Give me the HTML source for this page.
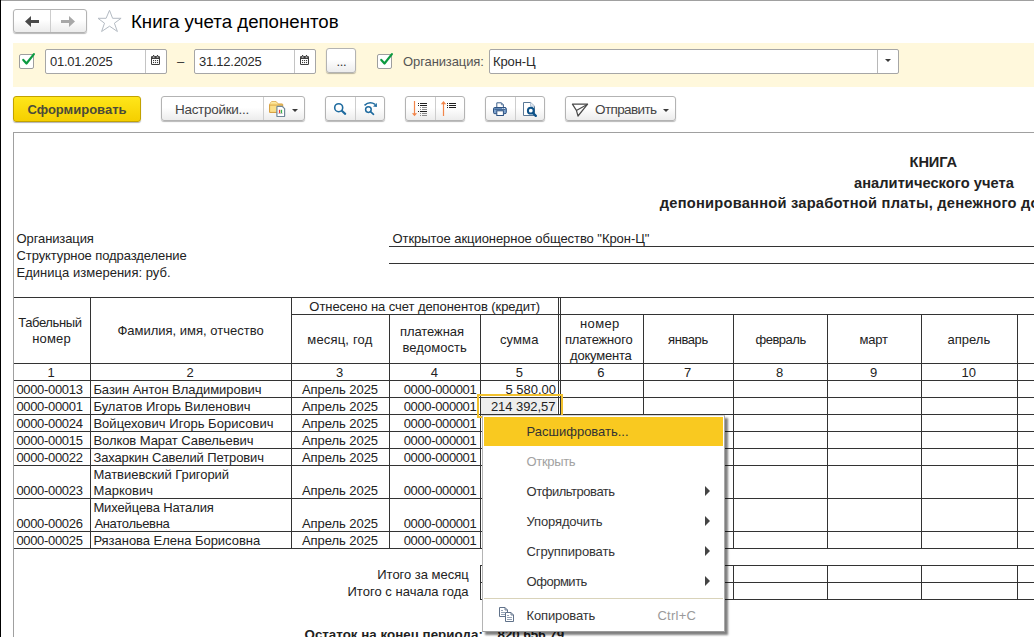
<!DOCTYPE html>
<html lang="ru">
<head>
<meta charset="utf-8">
<title>Книга учета депонентов</title>
<style>
*{box-sizing:border-box;margin:0;padding:0}
html,body{width:1034px;height:637px;overflow:hidden;background:#fff}
body{position:relative;font-family:"Liberation Sans",Arial,sans-serif;font-size:13px;color:#333;}
.abs{position:absolute}
.lb{position:absolute;left:0;top:0;width:1px;height:637px;background:#000}
.tb{position:absolute;left:1px;top:0;width:1033px;height:1px;background:#a0a0a0}
.btn{position:absolute;border:1px solid #b3b3b3;border-radius:3px;background:linear-gradient(#ffffff 0%,#ffffff 45%,#ececec 100%);box-shadow:0 1px 1px rgba(0,0,0,.28);}
.btn .div{position:absolute;top:0;bottom:0;width:1px;background:#cdcdcd}
.btn .lbl{position:absolute;white-space:nowrap;color:#444;line-height:15px}
.title{position:absolute;left:131px;top:11px;font-size:18.67px;line-height:22px;color:#000;white-space:nowrap}
.band{position:absolute;left:13px;top:43px;width:1021px;height:44px;background:#fff8dc}
.inp{position:absolute;border:1px solid #a6a6a6;border-radius:2px;background:#fff;height:25px}
.inp .t{position:absolute;left:4px;top:4px;line-height:15px;color:#2a2a2a;white-space:nowrap;letter-spacing:-0.25px}
.cb{position:absolute;width:15px;height:15px;border:1px solid #9e9e9e;border-radius:2px;background:#fff}
.ss{position:absolute;left:13px;top:132px;width:1030px;height:520px;border:1px solid #a0a0a0;background:#fff}
.sheet{position:absolute;left:0;top:0;width:1034px;height:637px;font-size:13px;color:#222}
.sheet .t{position:absolute;white-space:nowrap;line-height:16px}
.cl{position:absolute;display:flex;line-height:16px;white-space:nowrap;overflow:hidden}
.sheet .b{font-weight:bold;font-size:14.67px;line-height:18px;color:#222}
.sheet .b2{font-weight:bold;font-size:13.33px;line-height:16px;color:#222}
.hl{position:absolute;height:1px;background:#333}
.vl{position:absolute;width:1px;background:#333}
.c{text-align:center}
.r{text-align:right}
.menu{position:absolute;left:482px;top:415px;width:243px;height:217px;background:#fff;border:1px solid #d4d4d4;border-left-color:#b4b4b4;border-right-color:#a8a8a8;border-bottom-color:#9a9a9a;box-shadow:3px 3px 2px rgba(0,0,0,.5)}
.mi{position:absolute;left:45px;white-space:nowrap;line-height:15px;color:#333}
.arr{position:absolute;left:222px;width:0;height:0;border-left:5px solid #444;border-top:5px solid transparent;border-bottom:5px solid transparent}
#mtext .t{color:#333}
</style>
</head>
<body>
<div class="lb"></div><div class="tb"></div>

<!-- nav buttons -->
<div class="btn" style="left:13px;top:9px;width:74px;height:24px">
  <div class="div" style="left:36px"></div>
  <svg class="abs" style="left:11px;top:6px" width="14" height="11" viewBox="0 0 14 11"><path d="M0 5.5 L6 0 L6 4 L14 4 L14 7 L6 7 L6 11 Z" fill="#4a4a4a"/></svg>
  <svg class="abs" style="left:47px;top:6px" width="14" height="11" viewBox="0 0 14 11"><path d="M14 5.5 L8 0 L8 4 L0 4 L0 7 L8 7 L8 11 Z" fill="#a8a8a8"/></svg>
</div>
<svg class="abs" style="left:97px;top:9px" width="26" height="24" viewBox="0 0 26 24"><path d="M12.5 1.3 L15.6 9.3 L24.1 9.3 L17.4 14.2 L20.4 22.5 L12.6 17.2 L4.6 22.5 L7.5 14.2 L1 9.3 L9.1 9.3 Z" fill="#fff" stroke="#b4bbc3" stroke-width="1"/></svg>
<div class="title">Книга учета депонентов</div>

<!-- yellow band -->
<div class="band"></div>
<div class="cb" style="left:19px;top:54px"></div>
<svg class="abs" style="left:21px;top:52px" width="15" height="15" viewBox="0 0 15 15"><path d="M2.3 7.9 L5.5 11.5 L12.9 2.1" fill="none" stroke="#0c9a40" stroke-width="2.2" stroke-linecap="round" stroke-linejoin="round"/></svg>
<div class="inp" style="left:45px;top:49px;width:122px"><div class="t">01.01.2025</div><div class="abs" style="left:99px;top:0;width:1px;height:23px;background:#c4c4c4"></div>
 <svg class="abs" style="left:105px;top:5px" width="9" height="10" viewBox="0 0 9 10"><rect x="0" y="1" width="9" height="9" rx="1.2" fill="#3d3d3d"/><rect x="2" y="0" width="1.2" height="2.4" fill="#3d3d3d"/><rect x="5.9" y="0" width="1.2" height="2.4" fill="#3d3d3d"/><rect x="1.7" y="1.6" width="1.8" height="1" fill="#eee"/><rect x="5.6" y="1.6" width="1.8" height="1" fill="#eee"/><rect x="1" y="4" width="7" height="5" fill="#fff"/><g fill="#3d3d3d"><rect x="2" y="5" width="1.1" height="1.1"/><rect x="4" y="5" width="1.1" height="1.1"/><rect x="6" y="5" width="1.1" height="1.1"/><rect x="2" y="7" width="1.1" height="1.1"/><rect x="4" y="7" width="1.1" height="1.1"/><rect x="6" y="7" width="1.1" height="1.1"/></g></svg>
</div>
<div class="abs" style="left:177px;top:54px;line-height:15px;color:#333">–</div>
<div class="inp" style="left:194px;top:49px;width:122px"><div class="t">31.12.2025</div><div class="abs" style="left:99px;top:0;width:1px;height:23px;background:#c4c4c4"></div>
 <svg class="abs" style="left:105px;top:5px" width="9" height="10" viewBox="0 0 9 10"><rect x="0" y="1" width="9" height="9" rx="1.2" fill="#3d3d3d"/><rect x="2" y="0" width="1.2" height="2.4" fill="#3d3d3d"/><rect x="5.9" y="0" width="1.2" height="2.4" fill="#3d3d3d"/><rect x="1.7" y="1.6" width="1.8" height="1" fill="#eee"/><rect x="5.6" y="1.6" width="1.8" height="1" fill="#eee"/><rect x="1" y="4" width="7" height="5" fill="#fff"/><g fill="#3d3d3d"><rect x="2" y="5" width="1.1" height="1.1"/><rect x="4" y="5" width="1.1" height="1.1"/><rect x="6" y="5" width="1.1" height="1.1"/><rect x="2" y="7" width="1.1" height="1.1"/><rect x="4" y="7" width="1.1" height="1.1"/><rect x="6" y="7" width="1.1" height="1.1"/></g></svg>
</div>
<div class="btn" style="left:326px;top:48px;width:30px;height:25px"><div class="lbl" style="left:9.5px;top:4.5px;letter-spacing:-0.3px;color:#333">...</div></div>
<div class="cb" style="left:377px;top:54px"></div>
<svg class="abs" style="left:379px;top:52px" width="15" height="15" viewBox="0 0 15 15"><path d="M2.3 7.9 L5.5 11.5 L12.9 2.1" fill="none" stroke="#0c9a40" stroke-width="2.2" stroke-linecap="round" stroke-linejoin="round"/></svg>
<div class="abs" style="left:403px;top:54px;line-height:15px;color:#555;white-space:nowrap;letter-spacing:-0.1px">Организация:</div>
<div class="inp" style="left:489px;top:49px;width:410px"><div class="t" style="left:3px;letter-spacing:-0.1px">Крон-Ц</div><div class="abs" style="left:387px;top:0;width:1px;height:23px;background:#b8b8b8"></div>
 <div class="abs" style="left:394.5px;top:9.3px;width:0;height:0;border-top:3.4px solid #3a3a3a;border-left:3.2px solid transparent;border-right:3.2px solid transparent"></div>
</div>

<!-- toolbar -->
<div class="abs" style="left:13px;top:96px;width:128px;height:26px;border:1px solid #c2a200;border-radius:3px;background:linear-gradient(#ffe61a,#f5cf00);box-shadow:0 1px 1px rgba(0,0,0,.3)"><div class="abs" style="left:0;width:126px;top:5px;text-align:center;font-weight:bold;color:#4a4a3a;line-height:15px">Сформировать</div></div>

<div class="btn" style="left:161px;top:96px;width:144px;height:25px">
  <div class="lbl" style="left:13px;top:4.5px;font-size:13.5px;letter-spacing:-0.3px">Настройки...</div>
  <div class="div" style="left:101px"></div>
  <svg class="abs" style="left:107px;top:4px" width="17" height="17" viewBox="0 0 17 17"><path d="M0.6 3.4 L2.6 0.7 L7.2 0.7 L9.2 3 L13.1 3 Q13.7 3 13.7 3.6 L13.7 11.4 L0.6 11.4 Z" fill="#fbe08a" stroke="#d49a35" stroke-width="1" stroke-linejoin="round"/><path d="M1 4.1 L13.3 4.1" stroke="#dba544" stroke-width="1"/><path d="M1.4 2.6 L2.9 1.3 L6.9 1.3 L8.4 2.8" fill="none" stroke="#fff3b8" stroke-width="0.9"/><path d="M7.9 5.9 Q7.9 5.3 8.5 5.3 L13.2 5.3 L15.6 7.7 L15.6 14.9 Q15.6 15.5 15 15.5 L8.5 15.5 Q7.9 15.5 7.9 14.9 Z" fill="#fff" stroke="#6f8798" stroke-width="1.2"/><rect x="9.9" y="8.8" width="1.3" height="3.3" fill="#ee3b30"/><rect x="11.8" y="8.8" width="1.3" height="3.3" fill="#35b24a"/><rect x="9.3" y="12.1" width="4.4" height="0.6" fill="#9aa0a6"/></svg>
  <div class="abs" style="left:130px;top:12px;width:0;height:0;border-top:3.5px solid #3a3a3a;border-left:3.5px solid transparent;border-right:3.5px solid transparent"></div>
</div>
<div class="btn" style="left:325px;top:96px;width:60px;height:25px"><div class="div" style="left:29px"></div>
  <svg class="abs" style="left:6px;top:4px" width="17" height="17" viewBox="0 0 17 17"><circle cx="6.7" cy="6.7" r="4" fill="none" stroke="#1f6b9f" stroke-width="1.6"/><path d="M9.8 9.8 L13.2 12.9" stroke="#1f6b9f" stroke-width="2.1" stroke-linecap="round"/></svg>
  <svg class="abs" style="left:36px;top:3px" width="18" height="18" viewBox="0 0 18 18"><circle cx="6.4" cy="9.6" r="2.8" fill="none" stroke="#1f6b9f" stroke-width="1.5"/><path d="M8.5 11.7 L11.5 14.3" stroke="#1f6b9f" stroke-width="1.7" stroke-linecap="round"/><path d="M2.5 5.4 Q7.4 0.7 13.2 4.4" fill="none" stroke="#1f6b9f" stroke-width="1.5"/><path d="M14.9 3 L14.9 6.9 L11 6.5 Z" fill="#1f6b9f"/></svg>
</div>
<div class="btn" style="left:405px;top:96px;width:60px;height:25px"><div class="div" style="left:29px"></div>
  <svg class="abs" style="left:4px;top:2px" width="20" height="19" viewBox="0 0 20 19"><rect x="3.9" y="2" width="1.2" height="13" fill="#f2854a"/><path d="M1.9 14.3 L7.1 14.3 L4.5 17.3 Z" fill="#f2854a"/><g shape-rendering="crispEdges"><rect x="8" y="4" width="1" height="1" fill="#1e1e1e"/><rect x="10" y="4" width="7" height="1" fill="#1e1e1e"/><rect x="8" y="6" width="1" height="1" fill="#1e1e1e"/><rect x="10" y="6" width="7" height="1" fill="#1e1e1e"/><rect x="8" y="12" width="1" height="1" fill="#1e1e1e"/><rect x="10" y="12" width="7" height="1" fill="#1e1e1e"/><rect x="10" y="8" width="1" height="1" fill="#8c8c8c"/><rect x="12" y="8" width="5" height="1" fill="#8c8c8c"/><rect x="10" y="10" width="1" height="1" fill="#8c8c8c"/><rect x="12" y="10" width="5" height="1" fill="#8c8c8c"/><rect x="10" y="14" width="1" height="1" fill="#8c8c8c"/><rect x="12" y="14" width="5" height="1" fill="#8c8c8c"/><rect x="10" y="16" width="1" height="1" fill="#8c8c8c"/><rect x="12" y="16" width="5" height="1" fill="#8c8c8c"/></g></svg>
  <svg class="abs" style="left:33px;top:2px" width="20" height="19" viewBox="0 0 20 19"><rect x="3.9" y="4" width="1.2" height="13" fill="#f2854a"/><path d="M1.8 5.3 L7.2 5.3 L4.5 1.9 Z" fill="#f2854a"/><g shape-rendering="crispEdges"><rect x="8" y="4" width="1" height="1" fill="#1e1e1e"/><rect x="10" y="4" width="7" height="1" fill="#1e1e1e"/><rect x="8" y="6" width="1" height="1" fill="#1e1e1e"/><rect x="10" y="6" width="7" height="1" fill="#1e1e1e"/><rect x="8" y="8" width="1" height="1" fill="#1e1e1e"/><rect x="10" y="8" width="7" height="1" fill="#1e1e1e"/></g></svg>
</div>
<div class="btn" style="left:485px;top:96px;width:60px;height:25px"><div class="div" style="left:29px"></div>
  <svg class="abs" style="left:6px;top:4px" width="17" height="16" viewBox="0 0 17 16"><path d="M4.8 6.4 L4.8 1.8 L9.4 1.8 L11.4 3.8 L11.4 6.4" fill="#fff" stroke="#3f618c" stroke-width="1"/><path d="M9.4 1.8 L9.4 3.8 L11.4 3.8" fill="none" stroke="#3f618c" stroke-width="0.7"/><rect x="1.5" y="6.5" width="12.8" height="6.2" rx="1.3" fill="#7fa4cf" stroke="#2d5281" stroke-width="1"/><rect x="2.4" y="7.7" width="11" height="1" fill="#2d5281"/><rect x="10.3" y="7" width="1" height="0.8" fill="#fff"/><rect x="12" y="7" width="1" height="0.8" fill="#fff"/><rect x="4.8" y="9.8" width="6.6" height="4.7" fill="#fff" stroke="#2d5281" stroke-width="1"/></svg>
  <svg class="abs" style="left:35px;top:3px" width="18" height="18" viewBox="0 0 18 18"><path d="M2.5 2.5 L9.6 2.5 L13.5 6.2 L13.5 15.5 L2.5 15.5 Z" fill="#fff" stroke="#5a7896" stroke-width="1"/><path d="M9.6 2.5 L9.6 6.2 L13.5 6.2" fill="#eef3f8" stroke="#9ab0c6" stroke-width="0.8"/><circle cx="9.8" cy="10.7" r="2.9" fill="#fff" stroke="#0d5289" stroke-width="2"/><path d="M12 13 L14.8 15.8" stroke="#0d5289" stroke-width="2.4" stroke-linecap="round"/></svg>
</div>
<div class="btn" style="left:565px;top:96px;width:111px;height:25px">
  <svg class="abs" style="left:5px;top:5px" width="19" height="15" viewBox="0 0 19 15"><path d="M1.4 2.2 L16.6 2.2 L7 14 L5.4 8.4 Z" fill="none" stroke="#4a4a4a" stroke-width="1.2" stroke-linejoin="round"/><path d="M16.6 2.2 L5.4 8.4" fill="none" stroke="#4a4a4a" stroke-width="1.1"/></svg>
  <div class="lbl" style="left:29px;top:4.5px;font-size:13.5px;letter-spacing:-0.6px">Отправить</div>
  <div class="abs" style="left:97px;top:12px;width:0;height:0;border-top:3.5px solid #3a3a3a;border-left:3.5px solid transparent;border-right:3.5px solid transparent"></div>
</div>

<!-- spreadsheet -->
<div class="ss"></div>
<div class="sheet" id="sheet">
<div class="hl" style="left:389px;top:246px;width:645px;"></div>
<div class="hl" style="left:389px;top:263px;width:645px;"></div>
<div class="hl" style="left:14px;top:297px;width:1020px;"></div>
<div class="hl" style="left:291px;top:314px;width:743px;"></div>
<div class="hl" style="left:14px;top:363px;width:1020px;"></div>
<div class="hl" style="left:14px;top:380px;width:1020px;"></div>
<div class="hl" style="left:14px;top:397px;width:1020px;"></div>
<div class="hl" style="left:14px;top:414px;width:1020px;"></div>
<div class="hl" style="left:14px;top:431px;width:1020px;"></div>
<div class="hl" style="left:14px;top:448px;width:1020px;"></div>
<div class="hl" style="left:14px;top:465px;width:1020px;"></div>
<div class="hl" style="left:14px;top:498px;width:1020px;"></div>
<div class="hl" style="left:14px;top:531px;width:1020px;"></div>
<div class="hl" style="left:14px;top:548px;width:1020px;"></div>
<div class="vl" style="left:90px;top:297px;height:252px;"></div>
<div class="vl" style="left:291px;top:297px;height:252px;"></div>
<div class="vl" style="left:389px;top:314px;height:235px;"></div>
<div class="vl" style="left:480px;top:314px;height:235px;"></div>
<div class="vl" style="left:558px;top:297px;height:252px;"></div>
<div class="vl" style="left:560px;top:297px;height:252px;"></div>
<div class="vl" style="left:643px;top:314px;height:235px;"></div>
<div class="vl" style="left:733px;top:314px;height:235px;"></div>
<div class="vl" style="left:827px;top:314px;height:235px;"></div>
<div class="vl" style="left:921px;top:314px;height:235px;"></div>
<div class="vl" style="left:1017px;top:314px;height:235px;"></div>
<div class="hl" style="left:480px;top:565px;width:554px;"></div>
<div class="hl" style="left:480px;top:582px;width:554px;"></div>
<div class="hl" style="left:480px;top:599px;width:554px;"></div>
<div class="vl" style="left:480px;top:565px;height:35px;"></div>
<div class="vl" style="left:558px;top:565px;height:35px;"></div>
<div class="vl" style="left:560px;top:565px;height:35px;"></div>
<div class="vl" style="left:643px;top:565px;height:35px;"></div>
<div class="vl" style="left:733px;top:565px;height:35px;"></div>
<div class="vl" style="left:827px;top:565px;height:35px;"></div>
<div class="vl" style="left:921px;top:565px;height:35px;"></div>
<div class="vl" style="left:1017px;top:565px;height:35px;"></div>
<div class="abs" style="left:481px;top:398px;width:76px;height:16px;background:#eeeeee"></div>
<div class="t" style="left:909.60px;top:154px;font-size:14.67px;font-weight:bold;letter-spacing:-0.150px;">КНИГА</div>
<div class="t" style="left:854.05px;top:175px;font-size:14.67px;font-weight:bold;letter-spacing:0.026px;">аналитического учета</div>
<div class="t" style="left:659.80px;top:195px;font-size:14.67px;font-weight:bold;letter-spacing:0.23px;">депонированной заработной платы, денежного довольствия и стипендий</div>
<div class="t" style="left:16.50px;top:231px;letter-spacing:-0.100px;">Организация</div>
<div class="t" style="left:16.50px;top:248px;letter-spacing:-0.083px;">Структурное подразделение</div>
<div class="t" style="left:16.50px;top:265px;letter-spacing:0.023px;">Единица измерения: руб.</div>
<div class="t" style="left:392.50px;top:231px;letter-spacing:-0.054px;">Открытое акционерное общество "Крон-Ц"</div>
<div class="t" style="left:18.20px;top:315px;letter-spacing:-0.375px;">Табельный</div>
<div class="t" style="left:32.25px;top:331px;letter-spacing:0.175px;">номер</div>
<div class="t" style="left:117.40px;top:323px;">Фамилия, имя, отчество</div>
<div class="t" style="left:309.35px;top:299px;letter-spacing:-0.071px;">Отнесено на счет депонентов (кредит)</div>
<div class="t" style="left:307.30px;top:332px;letter-spacing:0.178px;">месяц, год</div>
<div class="t" style="left:400.00px;top:324px;letter-spacing:-0.075px;">платежная</div>
<div class="t" style="left:402.45px;top:340px;letter-spacing:0.062px;">ведомость</div>
<div class="t" style="left:500.00px;top:332px;letter-spacing:0.100px;">сумма</div>
<div class="t" style="left:580.05px;top:316px;letter-spacing:0.375px;">номер</div>
<div class="t" style="left:564.95px;top:332px;letter-spacing:-0.167px;">платежного</div>
<div class="t" style="left:570.00px;top:348px;letter-spacing:-0.200px;">документа</div>
<div class="t" style="left:668.00px;top:332px;letter-spacing:-0.400px;">январь</div>
<div class="t" style="left:755.50px;top:332px;letter-spacing:-0.500px;">февраль</div>
<div class="t" style="left:859.45px;top:332px;letter-spacing:-0.167px;">март</div>
<div class="t" style="left:947.50px;top:332px;">апрель</div>
<div class="t" style="left:47.50px;top:365px;">1</div>
<div class="t" style="left:186.50px;top:365px;">2</div>
<div class="t" style="left:336.10px;top:365px;">3</div>
<div class="t" style="left:430.80px;top:365px;">4</div>
<div class="t" style="left:515.70px;top:365px;">5</div>
<div class="t" style="left:597.20px;top:365px;">6</div>
<div class="t" style="left:684.00px;top:365px;">7</div>
<div class="t" style="left:776.00px;top:365px;">8</div>
<div class="t" style="left:870.00px;top:365px;">9</div>
<div class="t" style="left:961.50px;top:365px;">10</div>
<div class="t" style="left:16.40px;top:382px;letter-spacing:-0.322px;">0000-00013</div>
<div class="t" style="left:93.40px;top:382px;letter-spacing:-0.048px;">Базин Антон Владимирович</div>
<div class="t" style="left:302.00px;top:382px;letter-spacing:-0.060px;">Апрель 2025</div>
<div class="t" style="left:403.70px;top:382px;letter-spacing:-0.360px;">0000-000001</div>
<div class="t" style="left:505.40px;top:382px;">5 580,00</div>
<div class="t" style="left:16.40px;top:399px;letter-spacing:-0.322px;">0000-00001</div>
<div class="t" style="left:93.40px;top:399px;letter-spacing:-0.005px;">Булатов Игорь Виленович</div>
<div class="t" style="left:302.00px;top:399px;letter-spacing:-0.060px;">Апрель 2025</div>
<div class="t" style="left:403.70px;top:399px;letter-spacing:-0.360px;">0000-000001</div>
<div class="t" style="left:490.90px;top:399px;letter-spacing:-0.056px;">214 392,57</div>
<div class="t" style="left:16.40px;top:416px;letter-spacing:-0.322px;">0000-00024</div>
<div class="t" style="left:93.40px;top:416px;letter-spacing:0.032px;">Войцехович Игорь Борисович</div>
<div class="t" style="left:302.00px;top:416px;letter-spacing:-0.060px;">Апрель 2025</div>
<div class="t" style="left:403.70px;top:416px;letter-spacing:-0.360px;">0000-000001</div>
<div class="t" style="left:16.40px;top:433px;letter-spacing:-0.322px;">0000-00015</div>
<div class="t" style="left:93.40px;top:433px;letter-spacing:-0.064px;">Волков Марат Савельевич</div>
<div class="t" style="left:302.00px;top:433px;letter-spacing:-0.060px;">Апрель 2025</div>
<div class="t" style="left:403.70px;top:433px;letter-spacing:-0.360px;">0000-000001</div>
<div class="t" style="left:16.40px;top:450px;letter-spacing:-0.322px;">0000-00022</div>
<div class="t" style="left:93.40px;top:450px;letter-spacing:-0.108px;">Захаркин Савелий Петрович</div>
<div class="t" style="left:302.00px;top:450px;letter-spacing:-0.060px;">Апрель 2025</div>
<div class="t" style="left:403.70px;top:450px;letter-spacing:-0.360px;">0000-000001</div>
<div class="t" style="left:16.40px;top:483px;letter-spacing:-0.322px;">0000-00023</div>
<div class="t" style="left:93.40px;top:467px;letter-spacing:-0.047px;">Матвиевский Григорий</div>
<div class="t" style="left:93.40px;top:483px;letter-spacing:0.029px;">Маркович</div>
<div class="t" style="left:302.00px;top:483px;letter-spacing:-0.060px;">Апрель 2025</div>
<div class="t" style="left:403.70px;top:483px;letter-spacing:-0.360px;">0000-000001</div>
<div class="t" style="left:16.40px;top:516px;letter-spacing:-0.322px;">0000-00026</div>
<div class="t" style="left:93.40px;top:500px;letter-spacing:-0.119px;">Михейцева Наталия</div>
<div class="t" style="left:94.40px;top:516px;letter-spacing:-0.310px;">Анатольевна</div>
<div class="t" style="left:302.00px;top:516px;letter-spacing:-0.060px;">Апрель 2025</div>
<div class="t" style="left:403.70px;top:516px;letter-spacing:-0.360px;">0000-000001</div>
<div class="t" style="left:16.40px;top:533px;letter-spacing:-0.322px;">0000-00025</div>
<div class="t" style="left:93.40px;top:533px;letter-spacing:-0.030px;">Рязанова Елена Борисовна</div>
<div class="t" style="left:302.00px;top:533px;letter-spacing:-0.060px;">Апрель 2025</div>
<div class="t" style="left:403.70px;top:533px;letter-spacing:-0.360px;">0000-000001</div>
<div class="t" style="left:377.30px;top:567px;letter-spacing:-0.023px;">Итого за месяц</div>
<div class="t" style="left:347.50px;top:584px;letter-spacing:0.028px;">Итого с начала года</div>
<div class="t" style="left:304.50px;top:627px;font-size:13.33px;font-weight:bold;letter-spacing:0.021px;">Остаток на конец периода:</div>
<div class="t" style="left:497.50px;top:627px;font-size:13.33px;font-weight:bold;">820 656,79</div>
<div class="abs" style="left:477px;top:394px;width:86px;height:24px;border:2px solid #f2c12e"></div>
</div>

<!-- menu -->
<div class="menu">
 <div class="abs" style="left:1px;top:1px;width:239px;height:29px;background:#f9c920"></div>
 <div class="arr" style="top:70px"></div>
 <div class="arr" style="top:100px"></div>
 <div class="arr" style="top:130px"></div>
 <div class="arr" style="top:160px"></div>
 <div class="abs" style="left:1px;top:182px;width:239px;height:1px;background:#d9d3ba"></div>
 <svg class="abs" style="left:16px;top:191px" width="16" height="16" viewBox="0 0 16 16"><path d="M0.5 0.5 L6 0.5 L8.5 3 L8.5 9.5 L0.5 9.5 Z" fill="#fff" stroke="#60728a" stroke-width="1"/><path d="M6 0.5 L6 3 L8.5 3" fill="none" stroke="#60728a" stroke-width="0.9"/><path d="M2 3.5 L4 3.5 M2 5.5 L6 5.5 M2 7.5 L6 7.5" stroke="#93a2b5" stroke-width="1"/><path d="M6.5 5.5 L12 5.5 L14.5 8 L14.5 14.5 L6.5 14.5 Z" fill="#fff" stroke="#60728a" stroke-width="1"/><path d="M12 5.5 L12 8 L14.5 8" fill="none" stroke="#60728a" stroke-width="0.9"/><path d="M8 8.5 L10 8.5 M8 10.5 L13 10.5 M8 12.5 L13 12.5" stroke="#93a2b5" stroke-width="1"/></svg>
</div>
<div class="sheet" id="mtext">
<div class="t" style="left:526.60px;top:424px;letter-spacing:-0.007px;color:#333;">Расшифровать...</div>
<div class="t" style="left:526.60px;top:454px;letter-spacing:-0.350px;color:#a2a2a2;">Открыть</div>
<div class="t" style="left:526.60px;top:484px;letter-spacing:-0.475px;color:#333;">Отфильтровать</div>
<div class="t" style="left:526.60px;top:514px;letter-spacing:-0.150px;color:#333;">Упорядочить</div>
<div class="t" style="left:526.60px;top:544px;letter-spacing:-0.125px;color:#333;">Сгруппировать</div>
<div class="t" style="left:526.60px;top:574px;letter-spacing:-0.486px;color:#333;">Оформить</div>
<div class="t" style="left:526.60px;top:608px;letter-spacing:-0.144px;color:#333;">Копировать</div>
<div class="t" style="left:657.40px;top:608px;letter-spacing:0.260px;color:#9a9a9a;">Ctrl+C</div>
</div>

</body>
</html>
